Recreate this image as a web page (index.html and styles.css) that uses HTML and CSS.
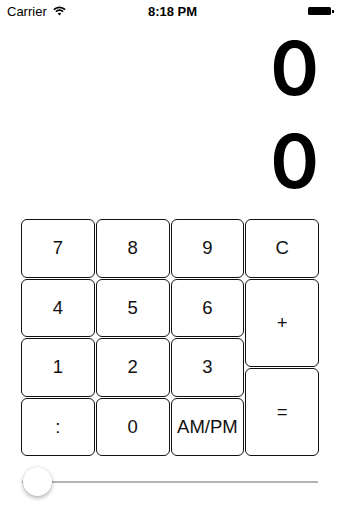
FILE: index.html
```html
<!DOCTYPE html>
<html>
<head>
<meta http-equiv="Content-Type" content="text/html; charset=utf-8">
<title>Time calculator</title>
<link rel="stylesheet" href="styles.css">
</head>
<body>
<div class="status">
	<div class="carrier">
		Carrier
		<svg class="wifi" width="13" height="10" viewBox="0 0 13 10">
			<path d="M0.9 3.6 A8 8 0 0 1 12.1 3.6" fill="none" stroke="#000" stroke-width="1.7"/>
			<path d="M2.9 5.7 A5.1 5.1 0 0 1 10.1 5.7" fill="none" stroke="#000" stroke-width="1.7"/>
			<path d="M4.8 7.7 A2.4 2.4 0 0 1 8.2 7.7 L6.5 9.6 Z" fill="#000"/>
		</svg>
	</div>
	<div class="clock">8:18 PM</div>
	<div class="battery"><span class="level"></span><span class="nub"></span></div>
</div>

<div class="display">
	<div class="value">0</div>
	<div class="value second">0</div>
</div>

<div class="keypad">
	<div class="key">7</div>
	<div class="key">8</div>
	<div class="key">9</div>
	<div class="key">C</div>
	<div class="key">4</div>
	<div class="key">5</div>
	<div class="key">6</div>
	<div class="key plus">+</div>
	<div class="key">1</div>
	<div class="key">2</div>
	<div class="key">3</div>
	<div class="key equals">=</div>
	<div class="key">:</div>
	<div class="key">0</div>
	<div class="key">AM/PM</div>
</div>

<div class="slider">
	<div class="track"></div>
	<div class="thumb"></div>
</div>
</body>
</html>
```

FILE: styles.css
```css
html, body{
	margin: 0;
	padding: 0;
	background-color: #fff;
}
body{
	width: 340px;
	height: 510px;
	overflow: hidden;
	font-family: "Liberation Sans", Arial, sans-serif;
	color: #000;
}
.status{
	display: grid;
	grid-template-columns: 1fr auto 1fr;
	align-items: center;
	height: 22px;
	padding: 0 6px 0 7px;
	font-size: 13px;
}
.carrier{
	display: flex;
	align-items: center;
}
.wifi{
	margin-left: 6px;
}
.clock{
	font-weight: bold;
	padding-left: 4px;
}
.battery{
	display: flex;
	align-items: center;
	justify-self: end;
}
.battery .level{
	display: block;
	width: 23px;
	height: 8px;
	background-color: #000;
	border-radius: 1.5px;
}
.battery .nub{
	display: block;
	width: 2px;
	height: 3px;
	margin-left: 1px;
	background-color: #000;
}
.display{
	padding-top: 8px;
	padding-right: 21px;
	text-align: right;
}
.value{
	font-family: Inter, "Liberation Sans", sans-serif;
	font-size: 74px;
	line-height: 76px;
	font-weight: 600;
}
.value.second{
	margin-top: 17px;
}
.keypad{
	display: grid;
	grid-template-columns: repeat(4, 73.75px);
	grid-template-rows: repeat(8, 28.75px);
	gap: 1px;
	margin: 20px 0 0 21px;
}
.key{
	grid-row: span 2;
	display: flex;
	align-items: center;
	justify-content: center;
	box-sizing: border-box;
	border: 1.5px solid #111;
	border-radius: 6px;
	background-color: #fff;
	font-size: 18.5px;
	color: #111;
}
.key.plus{
	grid-column: 4;
	grid-row: 3 / span 3;
}
.key.equals{
	grid-column: 4;
	grid-row: 6 / span 3;
}
.slider{
	position: relative;
	height: 30px;
	margin: 10px 22px 0 22px;
}
.track{
	position: absolute;
	left: 0;
	right: 0;
	top: 15px;
	height: 1.5px;
	background-color: #b4b4b4;
}
.thumb{
	position: absolute;
	left: 1px;
	top: 1px;
	width: 29px;
	height: 29px;
	border-radius: 50%;
	background-color: #fff;
	box-shadow: 0 2px 4px rgba(0,0,0,0.3), 0 0 0 0.5px rgba(0,0,0,0.08);
}
```
